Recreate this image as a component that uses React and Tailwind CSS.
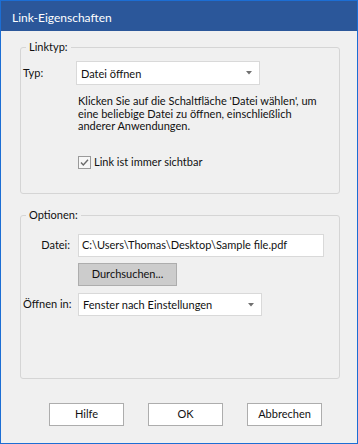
const font = "font-['Lato','Noto_Sans',sans-serif]"

function Arrow() {
  return (
    <svg width="6" height="4" viewBox="0 0 6 4" className="shrink-0">
      <polygon points="0,0 6,0 3,3.5" fill="#707070" />
    </svg>
  )
}

function Dropdown({ value, className }) {
  return (
    <div className={`flex items-center justify-between bg-white border border-[#d9d9d9] pl-[4px] pr-[7px] ${className}`}>
      <span className="leading-none">{value}</span>
      <Arrow />
    </div>
  )
}

function CheckBox() {
  return (
    <svg width="13" height="13" viewBox="0 0 13 13" className="shrink-0">
      <rect x="0.5" y="0.5" width="12" height="12" fill="#f7f7f7" stroke="#9a9a9a" />
      <path d="M3 6.5 L5.3 9 L10 3.8" fill="none" stroke="#6a6a6a" strokeWidth="1.4" />
    </svg>
  )
}

function Group({ title, className, children }) {
  return (
    <fieldset className={`ml-[19px] w-[320px] border border-[#d5d5d5] rounded-[3px] p-0 ${className}`}>
      <legend className="ml-[5px] px-[3px] leading-[16px]">{title}</legend>
      {children}
    </fieldset>
  )
}

function Button({ children, className }) {
  return (
    <button className={`h-[23px] flex items-center justify-center border border-[#adadad] ${className}`}>
      {children}
    </button>
  )
}

export default function App() {
  return (
    <div className={`w-[358px] h-[444px] flex flex-col bg-[#f0f0f0] border border-[#1c6ed4] text-[11px] text-[#111] ${font}`}>
      <div className="h-[30px] shrink-0 bg-[#2b579a] flex items-center pl-[11px] pt-[4px] text-[12px] text-white">
        Link-Eigenschaften
      </div>

      <Group title="Linktyp:" className="mt-[8px] h-[155px]">
        <div className="pt-[6px] pl-[2px]">
          <div className="flex items-center">
            <span className="w-[53px]">Typ:</span>
            <Dropdown value="Datei öffnen" className="w-[184px] h-[24px]" />
          </div>
          <p className="ml-[55px] mt-[10px] w-[246px] leading-[12.5px]">
            Klicken Sie auf die Schaltfläche 'Datei wählen', um eine beliebige Datei zu öffnen, einschließlich anderer Anwendungen.
          </p>
          <label className="ml-[55px] mt-[23px] flex items-center gap-[3px] h-[13px]">
            <CheckBox />
            <span>Link ist immer sichtbar</span>
          </label>
        </div>
      </Group>

      <Group title="Optionen:" className="mt-[13px] h-[172px]">
        <div className="pt-[11px] pl-[2px]">
          <div className="flex items-center">
            <span className="w-[47px] text-right whitespace-nowrap">Datei:</span>
            <div className="ml-[8px] w-[246px] h-[23px] bg-white border border-[#d9d9d9] flex items-center pl-[3px]">
              C:\Users\Thomas\Desktop\Sample file.pdf
            </div>
          </div>
          <Button className="ml-[55px] mt-[6px] w-[99px] bg-[#cccccc]">Durchsuchen...</Button>
          <div className="flex items-center mt-[7px]">
            <span className="w-[47px] text-right whitespace-nowrap">Öffnen in:</span>
            <Dropdown value="Fenster nach Einstellungen" className="ml-[8px] w-[184px] h-[23px]" />
          </div>
        </div>
      </Group>

      <div className="mt-[24px] ml-[48px] flex gap-[24px]">
        <Button className="w-[75px] bg-white">Hilfe</Button>
        <Button className="w-[75px] bg-white">OK</Button>
        <Button className="w-[75px] bg-white">Abbrechen</Button>
      </div>
    </div>
  )
}
